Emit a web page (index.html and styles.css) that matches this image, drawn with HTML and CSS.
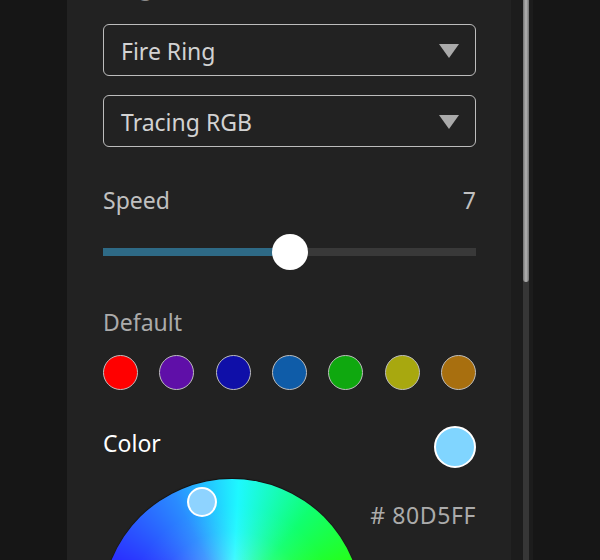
FILE: index.html
```html
<!DOCTYPE html>
<html>
<head>
<meta charset="utf-8">
<link rel="stylesheet" href="styles.css">
</head>
<body>
<div class="screen">
  <div class="side"></div>
  <main class="panel">
    <div class="section-title">Light Effect</div>
    <div class="select first">
      <span class="select-text">Fire Ring</span>
      <span class="caret"></span>
    </div>
    <div class="select">
      <span class="select-text">Tracing RGB</span>
      <span class="caret"></span>
    </div>
    <div class="row speed-row">
      <span class="label">Speed</span>
      <span class="label">7</span>
    </div>
    <div class="slider">
      <div class="track"><div class="fill" style="width:50%"></div></div>
      <div class="thumb" style="left:50%"></div>
    </div>
    <div class="label default-label">Default</div>
    <div class="swatches">
      <span class="swatch" style="background:#ff0000"></span>
      <span class="swatch" style="background:#5f0fa8"></span>
      <span class="swatch" style="background:#0f0fa8"></span>
      <span class="swatch" style="background:#0f5ca8"></span>
      <span class="swatch" style="background:#0fa80f"></span>
      <span class="swatch" style="background:#a8a80f"></span>
      <span class="swatch" style="background:#a86f0f"></span>
    </div>
    <div class="color-row">
      <span class="color-label">Color</span>
      <span class="current-color"></span>
    </div>
    <div class="wheel-row">
      <div class="wheel">
        <div class="wheel-white"></div>
        <span class="picker"></span>
      </div>
      <div class="hex"># 80D5FF</div>
    </div>
  </main>
  <div class="gutter">
    <div class="scroll-track"><div class="scroll-thumb"></div></div>
  </div>
  <div class="side-right"></div>
</div>
</body>
</html>
```
FILE: styles.css
```css
html, body {
  margin: 0;
  padding: 0;
  background: #161616;
  height: 560px;
  overflow: hidden;
}
.screen {
  display: flex;
  height: 560px;
  font-family: "Noto Sans", "Open Sans", sans-serif;
  font-size: 23px;
}
.side {
  width: 67px;
  flex: none;
}
.panel {
  width: 444px;
  flex: none;
  box-sizing: border-box;
  background: #222222;
  padding: 0 35px 0 36px;
  display: flex;
  flex-direction: column;
  overflow: hidden;
}
.panel > * {
  flex: none;
}
.section-title {
  margin-top: -30px;
  height: 32px;
  line-height: 32px;
  color: #8a8a8a;
  padding-left: 18px;
  margin-bottom: 22px;
}
.select {
  height: 52px;
  box-sizing: border-box;
  border: 1.5px solid #bdbdbd;
  border-radius: 6px;
  display: flex;
  align-items: center;
  justify-content: space-between;
  padding: 1px 16px 0 17px;
}
.select.first {
  margin-bottom: 19px;
}
.select-text {
  color: #d2d2d2;
  line-height: 32px;
}
.caret {
  width: 0;
  height: 0;
  border-left: 10px solid transparent;
  border-right: 10px solid transparent;
  border-top: 14px solid #aaaaaa;
  margin-top: 1px;
}
.row {
  display: flex;
  justify-content: space-between;
}
.speed-row {
  margin-top: 37px;
}
.label {
  color: #c0c0c0;
  line-height: 32px;
  height: 32px;
}
.slider {
  position: relative;
  height: 36px;
  margin-top: 18px;
  display: flex;
  align-items: center;
}
.track {
  flex: 1;
  height: 8px;
  background: #393939;
}
.fill {
  height: 100%;
  background: #2e6a86;
}
.thumb {
  position: absolute;
  top: 0;
  width: 36px;
  height: 36px;
  margin-left: -18px;
  border-radius: 50%;
  background: #ffffff;
}
.default-label {
  color: #ababab;
  margin-top: 36px;
}
.swatches {
  display: flex;
  justify-content: space-between;
  margin-top: 17px;
}
.swatch {
  width: 35px;
  height: 35px;
  box-sizing: border-box;
  border-radius: 50%;
  border: 1.5px solid #bdbdbd;
}
.color-row {
  display: flex;
  justify-content: space-between;
  align-items: flex-start;
  margin-top: 36px;
  height: 42px;
}
.color-label {
  color: #ffffff;
  line-height: 32px;
  margin-top: 1px;
}
.current-color {
  width: 42px;
  height: 42px;
  box-sizing: border-box;
  border-radius: 50%;
  border: 2px solid #ffffff;
  background: #80d5ff;
}
.wheel-row {
  display: flex;
  justify-content: space-between;
  align-items: flex-start;
  margin-top: 11px;
}
.wheel {
  position: relative;
  width: 260px;
  height: 260px;
  margin-left: -1px;
  border-radius: 50%;
  background: conic-gradient(from 3deg, #1ef8ff, #10ff70 35deg, #2cff00 75deg, #ffff00 120deg, #ff0000 180deg, #ff00ff 240deg, #2a30ff 290deg, #2a8cff 330deg, #1ef8ff 360deg);
  box-shadow: 0 -1px 1px rgba(0,0,0,0.5);
}
.wheel-white {
  position: absolute;
  inset: 0;
  border-radius: 50%;
  background: radial-gradient(circle closest-side, rgba(255,255,255,0.85) 0%, rgba(255,255,255,0.2) 30%, rgba(255,255,255,0.04) 60%, rgba(255,255,255,0) 80%);
}
.picker {
  position: absolute;
  left: 85px;
  top: 8px;
  width: 30px;
  height: 30px;
  box-sizing: border-box;
  border-radius: 50%;
  border: 2px solid #ffffff;
  background: #8ed3ff;
}
.hex {
  color: #ababab;
  line-height: 32px;
  margin-top: 20px;
  letter-spacing: 0.6px;
}
.gutter {
  width: 22px;
  flex: none;
  box-sizing: border-box;
  background: #1c1c1c;
  padding: 0 4px 0 12px;
  display: flex;
}
.scroll-track {
  flex: 1;
  background: #363636;
}
.scroll-thumb {
  height: 282px;
  background: linear-gradient(90deg, #707070, #b4b4b4 50%, #707070);
  border-radius: 0 0 3px 3px;
}
.side-right {
  flex: 1;
}
```
